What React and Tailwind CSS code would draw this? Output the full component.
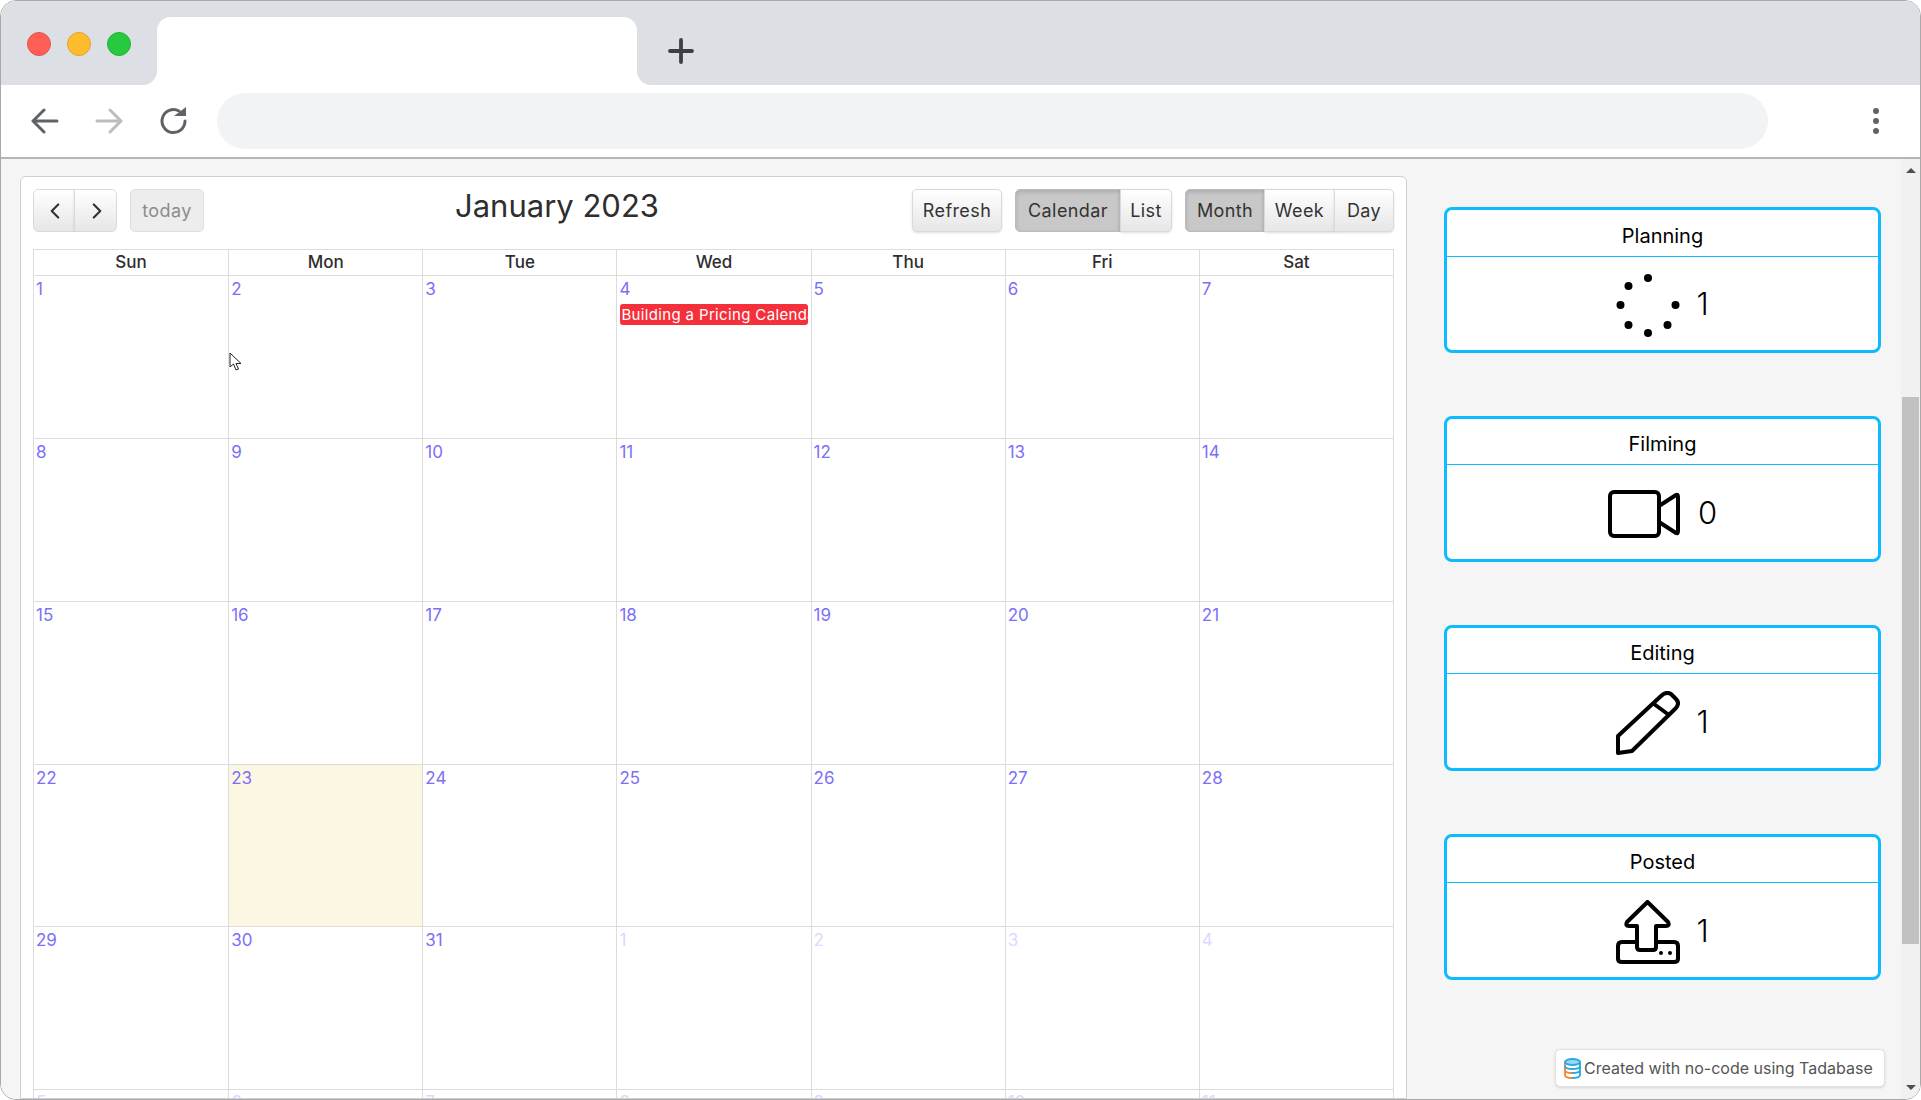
import React from 'react';
import { ChevronLeft, ChevronRight } from 'lucide-react';

const font = { fontFamily: 'Inter, "Open Sans", sans-serif' };

const rows = [
  [1, 2, 3, 4, 5, 6, 7],
  [8, 9, 10, 11, 12, 13, 14],
  [15, 16, 17, 18, 19, 20, 21],
  [22, 23, 24, 25, 26, 27, 28],
  [29, 30, 31, 1, 2, 3, 4],
  [5, 6, 7, 8, 9, 10, 11],
];

const days = ['Sun', 'Mon', 'Tue', 'Wed', 'Thu', 'Fri', 'Sat'];

const PlanningIcon = () => (
  <svg width="64" height="64" viewBox="0 0 64 64" fill="#000">
    <circle cx="32" cy="5" r="4" />
    <circle cx="12.5" cy="13" r="4" />
    <circle cx="4.5" cy="32" r="4" />
    <circle cx="12.5" cy="52" r="4" />
    <circle cx="32" cy="60" r="4" />
    <circle cx="51.5" cy="52" r="4" />
    <circle cx="59.5" cy="32" r="4" />
  </svg>
);

const VideoIcon = () => (
  <svg width="72" height="48" viewBox="0 0 72 48" fill="none" stroke="#000" strokeWidth="4" strokeLinejoin="round">
    <rect x="2" y="2" width="49" height="44" rx="4" />
    <path d="M51 16 L68 5 Q70 4 70 7 L70 41 Q70 44 68 43 L51 32" />
  </svg>
);

const PencilIcon = () => (
  <svg width="64" height="64" viewBox="0 0 64 64" fill="none" stroke="#000" strokeWidth="4" strokeLinejoin="round">
    <path d="M2 45 L45 5 Q50 0 55 3 L60 8 Q64 12 60 17 L16 60 L2 62 Z" />
    <path d="M38 13 L53 24" />
  </svg>
);

const UploadIcon = () => (
  <svg width="64" height="64" viewBox="0 0 64 64" fill="none" stroke="#000" strokeWidth="4" strokeLinejoin="round">
    <path d="M31.5 2 L52 22 Q54 26 50 26 L40 26 L40 47 Q40 50 37 50 L24 50 Q21 50 21 47 L21 26 L13 26 Q9 26 11 22 Z" />
    <path d="M21 42 L6 42 Q2 42 2 46 L2 59 Q2 62 6 62 L58 62 Q62 62 62 59 L62 46 Q62 42 58 42 L40 42" />
    <circle cx="45" cy="53" r="2" fill="#000" stroke="none" />
    <circle cx="54" cy="53" r="2" fill="#000" stroke="none" />
  </svg>
);

const cards = [
  { title: 'Planning', count: 1, icon: <PlanningIcon />, gap: 'gap-[16px]', head: 'h-[47px]' },
  { title: 'Filming', count: 0, icon: <VideoIcon />, gap: 'gap-[18px]', head: 'h-[46px]' },
  { title: 'Editing', count: 1, icon: <PencilIcon />, gap: 'gap-[16px]', head: 'h-[46px]' },
  { title: 'Posted', count: 1, icon: <UploadIcon />, gap: 'gap-[16px]', head: 'h-[46px]' },
];

const btn = 'h-[43px] flex items-center justify-center border border-[#d9d9d9] bg-gradient-to-b from-white to-[#e6e6e6] text-[18px] tracking-[0.4px] text-[#333] shadow-sm';
const btnActive = 'h-[43px] flex items-center justify-center bg-[#c8c8c8] text-[18px] tracking-[0.4px] text-[#333] border border-[#bbb] shadow-[inset_0_2px_4px_rgba(0,0,0,0.15)]';

export default function App() {
  return (
    <div style={font} className="h-[1100px] w-[1921px] flex flex-col overflow-hidden rounded-[16px] border border-[#a9a9a9] bg-white">
      {/* Tab strip */}
      <div className="flex h-[84px] shrink-0 bg-white">
        <div className="flex w-[156px] items-center gap-[16px] rounded-br-[14px] bg-[#dcdfe4] pl-[26px] pt-[2px]">
          <span className="size-[24px] rounded-full border border-[#e5524d] bg-[#ff5f57]"></span>
          <span className="size-[24px] rounded-full border border-[#e0a528] bg-[#febb2e]"></span>
          <span className="size-[24px] rounded-full border border-[#23b13a] bg-[#27c93f]"></span>
        </div>
        <div className="w-[480px] bg-[#dcdfe4] pt-[16px]">
          <div className="h-[68px] rounded-t-[14px] bg-white"></div>
        </div>
        <div className="flex flex-1 rounded-bl-[14px] bg-[#dcdfe4] pl-[31px] pt-[37px]">
          <svg width="26" height="26" viewBox="0 0 26 26" stroke="#3c4043" strokeWidth="3.8" strokeLinecap="round">
            <path d="M13 2 V24 M2 13 H24" />
          </svg>
        </div>
      </div>

      {/* Toolbar */}
      <div className="flex h-[74px] shrink-0 items-center border-b-2 border-[#b5b5b5] bg-white pl-[30px] pr-[41px]">
        <svg width="28" height="26" viewBox="0 0 28 26" fill="none" stroke="#5f6368" strokeWidth="3" strokeLinecap="round" strokeLinejoin="round">
          <path d="M26 13 H2 M13 2 L2 13 L13 24" />
        </svg>
        <svg className="ml-[36px]" width="28" height="26" viewBox="0 0 28 26" fill="none" stroke="#bdbdbd" strokeWidth="3" strokeLinecap="round" strokeLinejoin="round">
          <path d="M2 13 H26 M15 2 L26 13 L15 24" />
        </svg>
        <svg className="ml-[37px]" width="28" height="28" viewBox="0 0 28 28" fill="none" stroke="#5f6368" strokeWidth="3" strokeLinecap="round">
          <path d="M25 14 A11.5 11.5 0 1 1 19 4" />
          <path d="M14 9 L26 9 L26 0 Z" fill="#5f6368" stroke="none" />
        </svg>
        <div className="ml-[29px] h-[56px] w-[1551px] rounded-[28px] bg-[#f1f3f4]"></div>
        <div className="ml-auto flex flex-col gap-[4px]">
          <span className="size-[6px] rounded-full bg-[#5f6368]"></span>
          <span className="size-[6px] rounded-full bg-[#5f6368]"></span>
          <span className="size-[6px] rounded-full bg-[#5f6368]"></span>
        </div>
      </div>

      {/* Page */}
      <div className="relative flex min-h-0 flex-1 bg-[#f5f5f5]">
        {/* Calendar card */}
        <div className="ml-[19px] mt-[17px] flex w-[1387px] flex-col overflow-hidden rounded-t-[6px] border border-[#cfcfcf] bg-white pl-[12px] pr-[12px] pt-[12px]">
          <div className="flex h-[43px] shrink-0 items-start">
            <div className="flex overflow-hidden rounded-[5px]">
              <div className={`${btn} w-[42px] rounded-l-[5px] pl-[2px] text-[#222]`}>
                <ChevronLeft size={26} strokeWidth={2} />
              </div>
              <div className={`${btn} w-[43px] -ml-px rounded-r-[5px] pl-[2px] text-[#222]`}>
                <ChevronRight size={26} strokeWidth={2} />
              </div>
            </div>
            <div className="ml-[13px] flex h-[43px] w-[74px] items-center justify-center rounded-[5px] border border-[#dedede] bg-[#ededed] text-[18px] tracking-[0.4px] text-[#8c8c8c]">today</div>
            <div className="w-[706px] text-center text-[31px] leading-[34px] text-[#2e2e2e]">January 2023</div>
            <div className={`${btn} ml-auto w-[90px] rounded-[5px]`}>Refresh</div>
            <div className="ml-[13px] flex">
              <div className={`${btnActive} w-[106px] rounded-l-[5px]`}>Calendar</div>
              <div className={`${btn} w-[52px] -ml-px rounded-r-[5px]`}>List</div>
            </div>
            <div className="ml-[13px] flex">
              <div className={`${btnActive} w-[80px] rounded-l-[5px]`}>Month</div>
              <div className={`${btn} w-[71px] -ml-px`}>Week</div>
              <div className={`${btn} w-[60px] -ml-px rounded-r-[5px]`}>Day</div>
            </div>
          </div>

          {/* Month grid */}
          <div className="mt-[17px] w-[1361px] border-l border-r border-[#dcdcdc]">
            <div className="grid h-[27px] grid-cols-7 border-b border-t border-[#dcdcdc]">
              {days.map((d, i) => (
                <div key={d} className={`flex items-center justify-center text-[17px] font-medium text-[#2e2e2e] ${i > 0 ? 'border-l border-[#dcdcdc]' : ''}`}>{d}</div>
              ))}
            </div>
            {rows.map((row, r) => (
              <div key={r} className={`grid grid-cols-7 border-b border-[#dcdcdc] ${r === 3 ? 'h-[162px]' : 'h-[163px]'}`}>
                {row.map((n, c) => {
                  const faded = r === 5 || (r === 4 && c > 2);
                  const today = r === 3 && c === 1;
                  return (
                    <div key={c} className={`pl-[2px] ${r === 5 ? '' : 'pt-[1px]'} ${c > 0 ? 'border-l border-[#dcdcdc]' : ''} ${today ? 'bg-[#fcf7e3]' : ''}`}>
                      <div className={`text-[17px] leading-[24px] ${faded ? 'text-[#dcd8ff]' : 'text-[#7c6ff7]'}`}>{n}</div>
                      {r === 0 && c === 3 && (
                        <div className="ml-[1px] mr-[3px] mt-[3px] h-[21px] overflow-hidden whitespace-nowrap rounded-[3px] bg-[#f5303a] pl-[1px] text-[15px] tracking-[0.35px] leading-[21px] text-white">Building a Pricing Calendar</div>
                      )}
                    </div>
                  );
                })}
              </div>
            ))}
          </div>
        </div>

        {/* Status cards */}
        <div className="ml-[37px] flex w-[437px] flex-col gap-[63px] pt-[48px]">
          {cards.map((card) => (
            <div key={card.title} className="flex h-[146px] flex-col rounded-[8px] border-[3px] border-[#0dbbff] bg-white">
              <div className={`flex shrink-0 items-center justify-center border-b border-[#0dbbff] pt-[5px] text-[20px] text-black ${card.head}`}>{card.title}</div>
              <div className={`flex flex-1 items-center justify-center pt-[3px] ${card.gap}`}>
                {card.icon}
                <span className="mb-[3px] text-[31px] font-light leading-none text-black">{card.count}</span>
              </div>
            </div>
          ))}
        </div>

        {/* Scrollbar */}
        <div className="ml-auto flex w-[19px] flex-col items-center justify-between bg-[#f1f1f1] py-[9px]">
          <span className="h-0 w-0 border-x-[5px] border-b-[5px] border-x-transparent border-b-[#505050]"></span>
          <span className="mb-auto mt-[224px] h-[547px] w-[17px] bg-[#c1c1c1]"></span>
          <span className="h-0 w-0 border-x-[5px] border-t-[5px] border-x-transparent border-t-[#505050]"></span>
        </div>

        {/* Tadabase badge */}
        <div className="absolute bottom-[12px] right-[35px] flex h-[38px] w-[330px] items-center gap-[3px] rounded-[5px] border border-[#e2e2e2] bg-white pl-[8px] text-[16px] text-[#555] shadow-sm">
          <svg width="17" height="21" viewBox="0 0 17 21" fill="none" strokeWidth="1.9">
            <path d="M1 4 V17 Q1 20 8 20 M1 12 Q1 15 8 15" stroke="#f58634" />
            <ellipse cx="8.5" cy="4" rx="7.5" ry="3" fill="#9ad8f5" stroke="#29abe2" />
            <path d="M16 4 V17 Q16 20 8 20 M1 8 Q1 11 8.5 11 Q16 11 16 8 M8 15 Q16 15 16 12" stroke="#29abe2" />
          </svg>
          <span>Created with no-code using Tadabase</span>
        </div>

        {/* Mouse cursor */}
        <svg className="absolute left-[228px] top-[193px]" width="14" height="20" viewBox="0 0 14 20" fill="#fff" stroke="#222" strokeWidth="1">
          <path d="M1 1 L1 15 L4.5 12 L7 18 L9.5 17 L7 11.5 L12 11.5 Z" />
        </svg>
      </div>
    </div>
  );
}
